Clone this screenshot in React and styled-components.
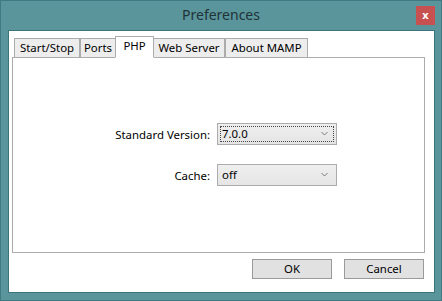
import React from 'react';
import styled, { createGlobalStyle } from 'styled-components';

const GlobalStyle = createGlobalStyle`
    html, body {
        margin: 0;
        padding: 0;
        background: #5a959c;
    }
    * {
        box-sizing: border-box;
    }
`
const Window = styled.div`
    width: 442px;
    height: 301px;
    display: flex;
    flex-direction: column;
    background: #5a959c;
    border: 1px solid #3f7a82;
    font-family: "Noto Sans", "Open Sans", sans-serif;
    font-size: 11.4px;
    color: #000;
`
const TitleBar = styled.div`
    height: 29px;
    flex-shrink: 0;
    display: grid;
    grid-template-columns: 1fr auto 1fr;
    align-items: center;
`
const Title = styled.div`
    grid-column: 2;
    font-size: 14px;
    color: #1f3437;
    padding-bottom: 3px;
`
const CloseButton = styled.div`
    grid-column: 3;
    justify-self: end;
    align-self: start;
    margin-top: 5px;
    margin-right: 6px;
    width: 19px;
    height: 19px;
    background: #c75050;
    display: flex;
    align-items: center;
    justify-content: center;
    color: #fff;
    font-size: 11px;
    font-weight: bold;
    line-height: 1;
    padding-bottom: 2px;
`
const Client = styled.div`
    flex: 1;
    margin: 0 6px 7px 7px;
    background: #fff;
    border: 1px solid #3c747b;
    display: flex;
    flex-direction: column;
`
const TabStrip = styled.div`
    display: flex;
    align-items: flex-end;
    margin: 5px 0 0 5px;
    height: 22px;
`
const Tab = styled.div`
    width: ${p => p.$width}px;
    height: ${p => (p.$active ? 22 : 20)}px;
    margin: ${p => (p.$active ? '0 -1px 0 -1px' : '0')};
    position: relative;
    z-index: ${p => (p.$active ? 1 : 0)};
    background: ${p => (p.$active ? '#fff' : '#ededed')};
    border: 1px solid #acacac;
    border-bottom: ${p => (p.$active ? '1px solid #fff' : '1px solid #acacac')};
    display: flex;
    align-items: center;
    justify-content: center;
    padding-bottom: ${p => (p.$active ? 3 : 1)}px;
    white-space: nowrap;
`
const Pane = styled.div`
    width: 413px;
    height: 196px;
    margin: -1px 0 0 3px;
    border: 1px solid #acacac;
    background: #fff;
    display: grid;
    grid-template-columns: 197px 120px;
    grid-auto-rows: 22px;
    column-gap: 7px;
    row-gap: 19px;
    align-items: center;
    align-content: start;
    padding-top: 65px;
`
const Label = styled.div`
    text-align: right;
`
const Select = styled.div`
    height: 22px;
    position: relative;
    display: flex;
    align-items: center;
    justify-content: space-between;
    padding: 0 8px 1px 4px;
    background: linear-gradient(#efefef, #e5e5e5);
    border: 1px solid #acacac;
    &::after {
        content: '';
        display: ${p => (p.$focused ? 'block' : 'none')};
        position: absolute;
        inset: 2px;
        border: 1px dotted #444;
    }
`
const Chevron = () => (
    <svg width="7" height="5" viewBox="0 0 7 5">
        <path d="M0.5 1 L3.5 4 L6.5 1" fill="none" stroke="#7a7a7a" strokeWidth="1" />
    </svg>
)
const ButtonRow = styled.div`
    display: flex;
    justify-content: flex-end;
    gap: 12px;
    margin-top: 6px;
    padding-right: 10px;
`
const Button = styled.div`
    width: 80px;
    height: 20px;
    background: #e1e1e1;
    border: 1px solid #9a9a9a;
    display: flex;
    align-items: center;
    justify-content: center;
    padding-bottom: 1px;
`

const tabs = [
    { label: 'Start/Stop', width: 66 },
    { label: 'Ports', width: 36 },
    { label: 'PHP', width: 39, active: true },
    { label: 'Web Server', width: 72 },
    { label: 'About MAMP', width: 83 },
]

const App = () => (
    <>
        <GlobalStyle />
        <Window>
            <TitleBar>
                <Title>Preferences</Title>
                <CloseButton>x</CloseButton>
            </TitleBar>
            <Client>
                <TabStrip>
                    {tabs.map(t => (
                        <Tab key={t.label} $width={t.width} $active={t.active}>{t.label}</Tab>
                    ))}
                </TabStrip>
                <Pane>
                    <Label>Standard Version:</Label>
                    <Select $focused>
                        <span>7.0.0</span>
                        <Chevron />
                    </Select>
                    <Label>Cache:</Label>
                    <Select>
                        <span>off</span>
                        <Chevron />
                    </Select>
                </Pane>
                <ButtonRow>
                    <Button>OK</Button>
                    <Button>Cancel</Button>
                </ButtonRow>
            </Client>
        </Window>
    </>
)

export default App;
